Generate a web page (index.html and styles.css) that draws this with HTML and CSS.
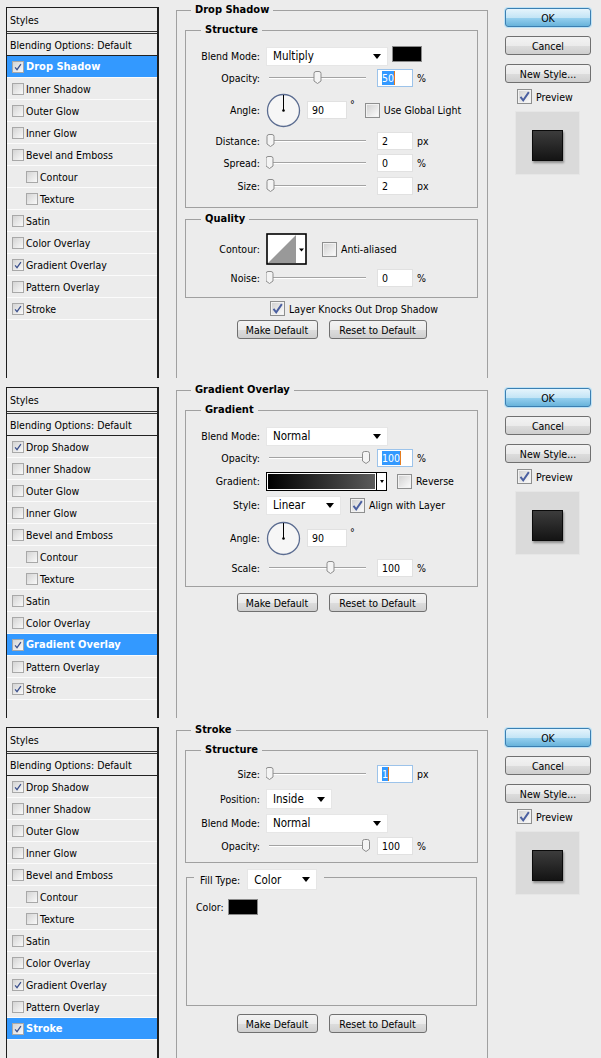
FILE: index.html
```html
<!DOCTYPE html>
<html lang="en">
<head>
	<meta charset="UTF-8">
	<title>Layer Style</title>
	<link rel="stylesheet" href="styles.css">
</head>
<body>

	<!-- Drop Shadow -->
	<section class="dialog">
		<div class="layers">
			<div class="layer head">Styles</div>
			<div class="layer blend">Blending Options: Default</div>
			<div class="layer on"><span class="cb"><svg viewBox="0 0 12 12"><path d="M2.5 6.5 4.8 9.2 9.5 2.5"/></svg></span>Drop Shadow</div>
			<div class="layer"><span class="cb"></span>Inner Shadow</div>
			<div class="layer"><span class="cb"></span>Outer Glow</div>
			<div class="layer"><span class="cb"></span>Inner Glow</div>
			<div class="layer"><span class="cb"></span>Bevel and Emboss</div>
			<div class="layer sub"><span class="cb"></span>Contour</div>
			<div class="layer sub"><span class="cb"></span>Texture</div>
			<div class="layer"><span class="cb"></span>Satin</div>
			<div class="layer"><span class="cb"></span>Color Overlay</div>
			<div class="layer"><span class="cb"><svg viewBox="0 0 12 12"><path d="M2.5 6.5 4.8 9.2 9.5 2.5"/></svg></span>Gradient Overlay</div>
			<div class="layer"><span class="cb"></span>Pattern Overlay</div>
			<div class="layer"><span class="cb"><svg viewBox="0 0 12 12"><path d="M2.5 6.5 4.8 9.2 9.5 2.5"/></svg></span>Stroke</div>
		</div>

		<fieldset class="group">
			<legend>Drop Shadow</legend>
			<fieldset class="box">
				<legend>Structure</legend>
				<div class="row h20"><label>Blend Mode:</label><span class="select mode">Multiply</span><span class="swatch"></span></div>
				<div class="row h24"><label>Opacity:</label>
					<svg class="slider" viewBox="0 0 104 16"><path class="track" d="M3 7.5H100"/><path class="track-lo" d="M3 8.5H100"/><path class="thumb" transform="translate(51.5 0)" d="M-3.5 11V3.5Q-3.5 1.5-1.5 1.5H1.5Q3.5 1.5 3.5 3.5V11L0 13.5Z"/></svg>
					<span class="field focus"><span class="sel">50</span><i class="caret"></i></span><span class="unit">%</span></div>
				<div class="row h40"><label>Angle:</label>
					<svg class="dial" viewBox="0 0 35 35"><circle cx="17.5" cy="17.5" r="16"/><path d="M17.5 17.5V2"/><circle class="hub" cx="17.5" cy="17.5" r="1.3"/></svg>
					<span class="field angle">90</span><span class="deg">°</span>
					<span class="cb big"></span><span>Use Global Light</span></div>
				<div class="row"><label>Distance:</label>
					<svg class="slider" viewBox="0 0 104 16"><path class="track" d="M3 7.5H100"/><path class="track-lo" d="M3 8.5H100"/><path class="thumb" transform="translate(4.5 0)" d="M-3.5 11V3.5Q-3.5 1.5-1.5 1.5H1.5Q3.5 1.5 3.5 3.5V11L0 13.5Z"/></svg>
					<span class="field">2</span><span class="unit">px</span></div>
				<div class="row"><label>Spread:</label>
					<svg class="slider" viewBox="0 0 104 16"><path class="track" d="M3 7.5H100"/><path class="track-lo" d="M3 8.5H100"/><path class="thumb" transform="translate(3.5 0)" d="M-3.5 11V3.5Q-3.5 1.5-1.5 1.5H1.5Q3.5 1.5 3.5 3.5V11L0 13.5Z"/></svg>
					<span class="field">0</span><span class="unit">%</span></div>
				<div class="row h23"><label>Size:</label>
					<svg class="slider" viewBox="0 0 104 16"><path class="track" d="M3 7.5H100"/><path class="track-lo" d="M3 8.5H100"/><path class="thumb" transform="translate(4.5 0)" d="M-3.5 11V3.5Q-3.5 1.5-1.5 1.5H1.5Q3.5 1.5 3.5 3.5V11L0 13.5Z"/></svg>
					<span class="field">2</span><span class="unit">px</span></div>
			</fieldset>

			<fieldset class="box quality">
				<legend>Quality</legend>
				<div class="row h32"><label>Contour:</label>
					<svg class="contour" viewBox="0 0 41 32"><rect x="1" y="1" width="39" height="30" fill="#fff" stroke="#000" stroke-width="1.6"/><path d="M2 30 30 2V30Z" fill="#999"/><path d="M33 15.5h5l-2.5 3z"/></svg>
					<span class="cb big gap15"></span><span>Anti-aliased</span></div>
				<div class="row h25"><label>Noise:</label>
					<svg class="slider" viewBox="0 0 104 16"><path class="track" d="M3 7.5H100"/><path class="track-lo" d="M3 8.5H100"/><path class="thumb" transform="translate(3.5 0)" d="M-3.5 11V3.5Q-3.5 1.5-1.5 1.5H1.5Q3.5 1.5 3.5 3.5V11L0 13.5Z"/></svg>
					<span class="field">0</span><span class="unit">%</span></div>
			</fieldset>

			<div class="knock"><span class="cb big"><svg viewBox="0 0 12 12"><path d="M2.3 6.3 4.8 9.5 10 2"/></svg></span>Layer Knocks Out Drop Shadow</div>
			<div class="actions"><button class="btn make">Make Default</button><button class="btn reset">Reset to Default</button></div>
		</fieldset>

		<div class="side">
			<button class="btn ok">OK</button>
			<button class="btn">Cancel</button>
			<button class="btn">New Style...</button>
			<div class="preview-toggle"><span class="cb big"><svg viewBox="0 0 12 12"><path d="M2.3 6.3 4.8 9.5 10 2"/></svg></span>Preview</div>
			<div class="preview"><div class="sample"></div></div>
		</div>
	</section>

	<!-- Gradient Overlay -->
	<section class="dialog short">
		<div class="layers">
			<div class="layer head">Styles</div>
			<div class="layer blend">Blending Options: Default</div>
			<div class="layer"><span class="cb"><svg viewBox="0 0 12 12"><path d="M2.5 6.5 4.8 9.2 9.5 2.5"/></svg></span>Drop Shadow</div>
			<div class="layer"><span class="cb"></span>Inner Shadow</div>
			<div class="layer"><span class="cb"></span>Outer Glow</div>
			<div class="layer"><span class="cb"></span>Inner Glow</div>
			<div class="layer"><span class="cb"></span>Bevel and Emboss</div>
			<div class="layer sub"><span class="cb"></span>Contour</div>
			<div class="layer sub"><span class="cb"></span>Texture</div>
			<div class="layer"><span class="cb"></span>Satin</div>
			<div class="layer"><span class="cb"></span>Color Overlay</div>
			<div class="layer on"><span class="cb"><svg viewBox="0 0 12 12"><path d="M2.5 6.5 4.8 9.2 9.5 2.5"/></svg></span>Gradient Overlay</div>
			<div class="layer"><span class="cb"></span>Pattern Overlay</div>
			<div class="layer"><span class="cb"><svg viewBox="0 0 12 12"><path d="M2.5 6.5 4.8 9.2 9.5 2.5"/></svg></span>Stroke</div>
		</div>

		<fieldset class="group">
			<legend>Gradient Overlay</legend>
			<fieldset class="box gradient">
				<legend>Gradient</legend>
				<div class="row h20"><label>Blend Mode:</label><span class="select mode">Normal</span></div>
				<div class="row h24"><label>Opacity:</label>
					<svg class="slider" viewBox="0 0 104 16"><path class="track" d="M3 7.5H100"/><path class="track-lo" d="M3 8.5H100"/><path class="thumb" transform="translate(100 0)" d="M-3.5 11V3.5Q-3.5 1.5-1.5 1.5H1.5Q3.5 1.5 3.5 3.5V11L0 13.5Z"/></svg>
					<span class="field focus"><span class="sel">100</span><i class="caret"></i></span><span class="unit">%</span></div>
				<div class="row"><label>Gradient:</label>
					<span class="gradpick"><span class="ramp"></span><span class="drop"></span></span>
					<span class="cb big gap10"></span><span>Reverse</span></div>
				<div class="row h26"><label>Style:</label><span class="select style">Linear</span>
					<span class="cb big gap9"><svg viewBox="0 0 12 12"><path d="M2.3 6.3 4.8 9.5 10 2"/></svg></span><span>Align with Layer</span></div>
				<div class="row h40"><label>Angle:</label>
					<svg class="dial" viewBox="0 0 35 35"><circle cx="17.5" cy="17.5" r="16"/><path d="M17.5 17.5V2"/><circle class="hub" cx="17.5" cy="17.5" r="1.3"/></svg>
					<span class="field angle">90</span><span class="deg">°</span></div>
				<div class="row h20"><label>Scale:</label>
					<svg class="slider" viewBox="0 0 104 16"><path class="track" d="M3 7.5H100"/><path class="track-lo" d="M3 8.5H100"/><path class="thumb" transform="translate(64.5 0)" d="M-3.5 11V3.5Q-3.5 1.5-1.5 1.5H1.5Q3.5 1.5 3.5 3.5V11L0 13.5Z"/></svg>
					<span class="field">100</span><span class="unit">%</span></div>
			</fieldset>
			<div class="actions loose"><button class="btn make">Make Default</button><button class="btn reset">Reset to Default</button></div>
		</fieldset>

		<div class="side">
			<button class="btn ok">OK</button>
			<button class="btn">Cancel</button>
			<button class="btn">New Style...</button>
			<div class="preview-toggle"><span class="cb big"><svg viewBox="0 0 12 12"><path d="M2.3 6.3 4.8 9.5 10 2"/></svg></span>Preview</div>
			<div class="preview"><div class="sample"></div></div>
		</div>
	</section>

	<!-- Stroke -->
	<section class="dialog short">
		<div class="layers">
			<div class="layer head">Styles</div>
			<div class="layer blend">Blending Options: Default</div>
			<div class="layer"><span class="cb"><svg viewBox="0 0 12 12"><path d="M2.5 6.5 4.8 9.2 9.5 2.5"/></svg></span>Drop Shadow</div>
			<div class="layer"><span class="cb"></span>Inner Shadow</div>
			<div class="layer"><span class="cb"></span>Outer Glow</div>
			<div class="layer"><span class="cb"></span>Inner Glow</div>
			<div class="layer"><span class="cb"></span>Bevel and Emboss</div>
			<div class="layer sub"><span class="cb"></span>Contour</div>
			<div class="layer sub"><span class="cb"></span>Texture</div>
			<div class="layer"><span class="cb"></span>Satin</div>
			<div class="layer"><span class="cb"></span>Color Overlay</div>
			<div class="layer"><span class="cb"><svg viewBox="0 0 12 12"><path d="M2.5 6.5 4.8 9.2 9.5 2.5"/></svg></span>Gradient Overlay</div>
			<div class="layer"><span class="cb"></span>Pattern Overlay</div>
			<div class="layer on"><span class="cb"><svg viewBox="0 0 12 12"><path d="M2.5 6.5 4.8 9.2 9.5 2.5"/></svg></span>Stroke</div>
		</div>

		<fieldset class="group">
			<legend>Stroke</legend>
			<fieldset class="box stroke">
				<legend>Structure</legend>
				<div class="row"><label>Size:</label>
					<svg class="slider" viewBox="0 0 104 16"><path class="track" d="M3 7.5H100"/><path class="track-lo" d="M3 8.5H100"/><path class="thumb" transform="translate(3.5 0)" d="M-3.5 11V3.5Q-3.5 1.5-1.5 1.5H1.5Q3.5 1.5 3.5 3.5V11L0 13.5Z"/></svg>
					<span class="field focus"><span class="sel">1</span><i class="caret"></i></span><span class="unit">px</span></div>
				<div class="row h28"><label>Position:</label><span class="select pos">Inside</span></div>
				<div class="row h20"><label>Blend Mode:</label><span class="select mode">Normal</span></div>
				<div class="row h26"><label>Opacity:</label>
					<svg class="slider" viewBox="0 0 104 16"><path class="track" d="M3 7.5H100"/><path class="track-lo" d="M3 8.5H100"/><path class="thumb" transform="translate(100 0)" d="M-3.5 11V3.5Q-3.5 1.5-1.5 1.5H1.5Q3.5 1.5 3.5 3.5V11L0 13.5Z"/></svg>
					<span class="field">100</span><span class="unit">%</span></div>
			</fieldset>

			<fieldset class="fill">
				<legend><span>Fill Type:</span><span class="select filltype">Color</span></legend>
				<div class="fill-body">
					<div class="row h20"><span>Color:</span><span class="swatch small"></span></div>
				</div>
			</fieldset>
			<div class="actions wide"><button class="btn make">Make Default</button><button class="btn reset">Reset to Default</button></div>
		</fieldset>

		<div class="side">
			<button class="btn ok">OK</button>
			<button class="btn">Cancel</button>
			<button class="btn">New Style...</button>
			<div class="preview-toggle"><span class="cb big"><svg viewBox="0 0 12 12"><path d="M2.3 6.3 4.8 9.5 10 2"/></svg></span>Preview</div>
			<div class="preview"><div class="sample"></div></div>
		</div>
	</section>

</body>
</html>
```

FILE: styles.css
```css
html, body {
	margin: 0;
	padding: 0;
}
body {
	background: #ececec;
	color: #000;
	font: 10.5px "DejaVu Sans Condensed", "DejaVu Sans", sans-serif;
	font-stretch: condensed;
}

/* one Layer Style window: styles list | settings | buttons */
.dialog {
	display: grid;
	grid-template-columns: 153px 312px 86px;
	column-gap: 17px;
	padding-left: 6px;
	height: 380px;
	box-sizing: border-box;
}
.dialog.short {
	height: 340px;
}

/* styles list */
.layers {
	margin: 7px 0 2px;
	border: 1px solid #1e1e1e;
	border-right-width: 2px;
	border-bottom: 0;
	box-sizing: border-box;
}
.layer {
	display: flex;
	align-items: center;
	height: 21px;
	padding-left: 5px;
	border-bottom: 1px solid #fbfbfb;
	white-space: nowrap;
}
.layer.head {
	height: 23px;
	padding-left: 3px;
	border-bottom: 3px double #333;
}
.layer.blend {
	padding-left: 3px;
	border-bottom-color: #222;
}
.layer.sub {
	padding-left: 19px;
}
.layer.on {
	background: #3399ff;
	color: #fff;
	font-size: 11px;
	font-weight: bold;
}

/* checkboxes */
.cb {
	display: inline-flex;
	flex: none;
	width: 12px;
	height: 12px;
	margin-right: 2px;
	box-sizing: border-box;
	border: 1px solid #a8a8a8;
	background: linear-gradient(135deg, #d4d4d4, #f9f9f9);
}
.cb svg {
	width: 100%;
	height: 100%;
}
.cb path {
	fill: none;
	stroke: #3a4f8c;
	stroke-width: 1.5;
}
.cb.big {
	width: 15px;
	height: 15px;
	margin-right: 4px;
	border-color: #8e8f8f;
	background: linear-gradient(135deg, #cfcfcf, #fdfdfd);
	box-shadow: inset 0 0 0 1px #f2f2f2;
}
.cb.big path {
	stroke: #4a5fa0;
	stroke-width: 1.8;
}
.cb.gap15 { margin-left: 15px; }
.cb.gap10 { margin-left: 10px; }
.cb.gap9 { margin-left: 9px; }

/* group boxes */
fieldset {
	margin: 0;
	min-width: 0;
	border: 1px solid #a0a0a0;
}
legend {
	font-size: 11px;
	font-weight: bold;
	line-height: 14px;
	padding: 0 4px;
}
.group {
	margin: 3px 0 2px;
	padding: 1px 9px 0 8px;
	border-bottom: 0;
}
.group > legend {
	margin-left: 6px;
}
.box {
	margin-top: 5px;
	padding: 9px 0 10px;
}
.box > legend {
	margin-left: 15px;
}
.box.quality {
	margin-top: 4px;
	padding: 7px 0 7px;
}
.box.gradient {
	padding-bottom: 8px;
}
.box.stroke {
	padding: 6px 0 3px;
}

/* setting rows */
.row {
	display: flex;
	align-items: center;
	height: 22px;
	white-space: nowrap;
}
.row.h20 { height: 20px; }
.row.h23 { height: 23px; }
.row.h24 { height: 24px; }
.row.h25 { height: 25px; }
.row.h26 { height: 26px; }
.row.h28 { height: 28px; }
.row.h32 { height: 32px; }
.row.h40 { height: 40px; }
.row > label {
	flex: none;
	width: 74px;
	margin-right: 6px;
	text-align: right;
}

.select {
	display: flex;
	align-items: center;
	flex: none;
	height: 19px;
	padding: 0 6px;
	box-sizing: border-box;
	background: #fff;
	border: 1px solid #e6e6e6;
	font-size: 11.5px;
	font-weight: normal;
}
.select::after {
	content: "";
	margin-left: auto;
	border-style: solid;
	border-color: #000 transparent transparent;
	border-width: 5px 4.5px 0;
}
.select.mode { width: 122px; }
.select.style { width: 75px; }
.select.pos { width: 66px; height: 20px; }
.select.filltype { width: 70px; height: 21px; margin-left: 7px; }

.swatch {
	width: 30px;
	height: 16px;
	margin-left: 4px;
	box-sizing: border-box;
	background: #000;
	border: 1px solid #8a8a8a;
	align-self: flex-start;
}
.swatch.small {
	align-self: center;
}

.slider {
	flex: none;
	width: 104px;
	height: 16px;
}
.slider .track {
	stroke: #a3a3a3;
}
.slider .track-lo {
	stroke: #fff;
}
.slider .thumb {
	fill: #f4f4f4;
	stroke: #8d8d8d;
}

.field {
	display: flex;
	align-items: center;
	flex: none;
	width: 36px;
	height: 18px;
	margin-left: 7px;
	padding-left: 4px;
	box-sizing: border-box;
	background: #fff;
	border: 1px solid #e1e1e1;
}
.field.focus {
	border-color: #9cc3ea;
}
.field.angle {
	width: 40px;
	margin-left: 6px;
}
.sel {
	background: #3399ff;
	color: #fff;
	line-height: 14px;
}
.caret {
	width: 1px;
	height: 14px;
	background: #e57c1e;
}
.unit {
	margin-left: 4px;
}
.deg {
	margin: 8px 10px 0 3px;
	align-self: flex-start;
}

.dial {
	flex: none;
	width: 35px;
	height: 35px;
}
.dial circle {
	fill: #f6f6f6;
	stroke: #5c6d91;
	stroke-width: 1.3;
}
.dial path {
	stroke: #000;
}
.dial .hub {
	fill: #000;
	stroke: none;
}

.contour {
	flex: none;
	width: 41px;
	height: 32px;
}

.gradpick {
	display: flex;
	flex: none;
	width: 121px;
	height: 19px;
	box-sizing: border-box;
	border: 1px solid #000;
	background: #fff;
}
.gradpick .ramp {
	flex: 1;
	margin: 1px;
	background: linear-gradient(to right, #000, #5b5b5b);
}
.gradpick .drop {
	display: flex;
	align-items: center;
	justify-content: center;
	width: 9px;
	border-left: 1px solid #000;
}
.gradpick .drop::after {
	content: "";
	border-style: solid;
	border-color: #000 transparent transparent;
	border-width: 3px 2.5px 0;
}

/* fill type box in Stroke */
.fill {
	margin: 1px 1px 0;
	padding: 0;
}
.fill > legend {
	display: flex;
	align-items: center;
	margin-left: 7px;
	padding: 5px 7px 0 6px;
	font-size: 10.5px;
	font-weight: normal;
	line-height: normal;
}
.fill-body {
	height: 115px;
	padding: 7px 9px 0;
	box-sizing: border-box;
}

.knock {
	display: flex;
	align-items: center;
	height: 17px;
	margin: 2px 0 0 85px;
}

/* buttons */
.btn {
	height: 19px;
	padding: 0;
	box-sizing: border-box;
	border: 1px solid #707070;
	border-radius: 3px;
	background: linear-gradient(#f3f3f3, #ebebeb 50%, #dddddd 51%, #cfcfcf);
	font: inherit;
	color: #000;
}
.btn.make { width: 81px; }
.btn.reset { width: 98px; }
.btn.ok {
	border-color: #3c7fb1;
	background: linear-gradient(#e5f4fc, #c4e5f6 50%, #98d1ef 51%, #68b3db);
	box-shadow: 0 0 0 1px #bde3f7;
}
.actions {
	display: flex;
	justify-content: center;
	gap: 11px;
	margin-top: 3px;
}
.actions.loose { margin-top: 6px; }
.actions.wide { margin-top: 8px; }

.side {
	display: flex;
	flex-direction: column;
	padding-top: 8px;
}
.side .btn {
	margin-bottom: 9px;
}
.preview-toggle {
	display: flex;
	align-items: center;
	height: 19px;
	margin: -5px 0 0 12px;
}
.preview {
	display: flex;
	justify-content: center;
	width: 65px;
	height: 64px;
	margin: 5px 0 0 10px;
	padding-top: 18px;
	box-sizing: border-box;
	background: #dadada;
	border: 1px solid #e6e6e6;
}
.sample {
	width: 31px;
	height: 31px;
	box-sizing: border-box;
	border: 1px solid #0a0a0a;
	background: linear-gradient(#3c3c3c, #141414);
	box-shadow: 1px 2px 2px rgba(0, 0, 0, 0.35);
}
```
